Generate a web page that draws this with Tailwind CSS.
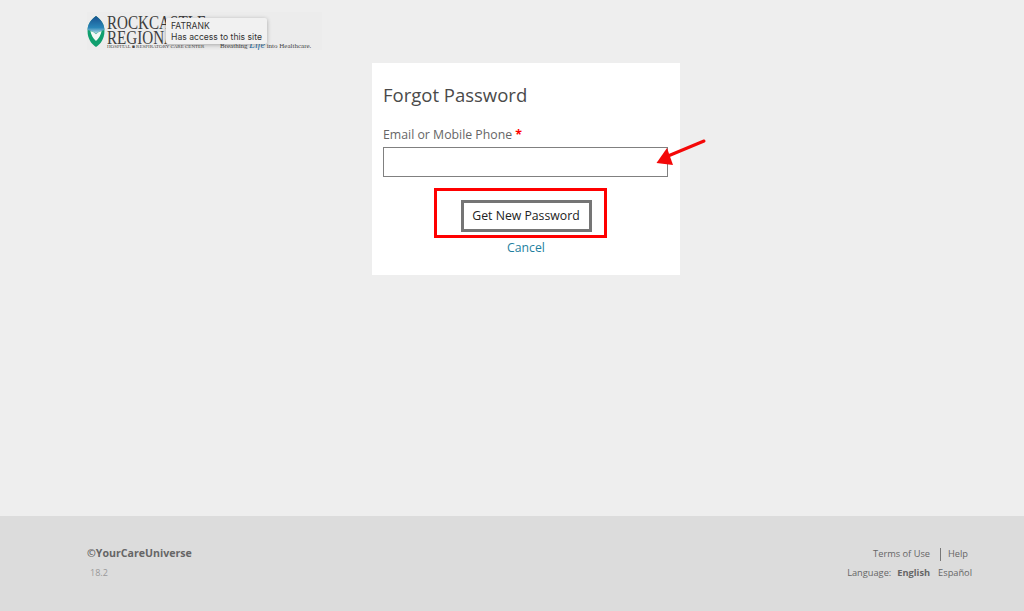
<!doctype html>
<html lang="en">
<head>
<meta charset="utf-8">
<script src="https://cdn.jsdelivr.net/npm/@tailwindcss/browser@4"></script>
<title>Forgot Password</title>
</head>
<body class="m-0 bg-[#eeeeee] font-['Open_Sans',sans-serif]">
<div class="flex h-[611px] w-[1024px] flex-col overflow-hidden">
  <header class="h-[63px] shrink-0 pl-[87px] pt-[12px]">
    <div class="relative h-[38px] w-[235px] bg-[#ececec]">
      <div class="absolute left-0 top-[4px] flex items-start">
        <svg width="18" height="31" viewBox="0 0 19 33" class="shrink-0">
          <defs>
            <linearGradient id="leafTop" x1="0" y1="0" x2="0" y2="1">
              <stop offset="0" stop-color="#17508f"/>
              <stop offset="0.65" stop-color="#2a86b8"/>
              <stop offset="1" stop-color="#bcdde6"/>
            </linearGradient>
          </defs>
          <path d="M9.500 0C4 4 .5 9 .5 16c0 8 4 14 9 17 5-3 9-9 9-17 0-7-3.500-12-9-16z" fill="#0f9f6e"/>
          <path d="M9.500 0C4 4 .5 9 .5 15c3 .5 6 1.500 9 4 3-2.500 6-3.500 9-4 0-6-3.500-11-9-15z" fill="url(#leafTop)"/>
          <path d="M3.500 16c2 .5 4 1.500 6 3.500 2-2 4-3 6-3.500-1 4.500-3 8-6 10.500-3-2.500-5-6-6-10.500z" fill="#f4f8f6"/>
        </svg>
        <div class="ml-[2px] origin-left scale-x-[0.84] font-['Liberation_Serif',serif] text-[18px] leading-[15px] text-[#3d3d3d]">
          <div>ROCKCASTLE</div>
          <div>REGIONAL</div>
        </div>
      </div>
      <div class="absolute left-[20px] top-[32px] whitespace-nowrap font-['Liberation_Serif',serif] text-[5px] leading-[6px] text-[#444444]">HOSPITAL &#9632; RESPIRATORY CARE CENTER</div>
      <div class="absolute left-[133px] top-[28px] whitespace-nowrap font-['Liberation_Serif',serif] text-[7px] leading-[10px] text-[#444444]">Breathing <span class="italic text-[10px] text-[#1f6fa8]">Life</span> into Healthcare.</div>
      <div class="absolute left-[79px] top-[6px] h-[26px] w-[101px] rounded-[2px] bg-[#f1f1f1] px-[5px] pt-[3px] font-['Inter',sans-serif] text-[8.600px] leading-[11px] text-[#333333] shadow-[0_1px_4px_rgba(0,0,0,0.3)]">
        <div>FATRANK</div>
        <div class="whitespace-nowrap">Has access to this site</div>
      </div>
    </div>
  </header>

  <main class="flex flex-1 justify-center pl-[28px]">
    <div class="relative h-[212px] w-[308px] bg-white px-[11px] pt-[18px]">
      <h1 class="text-[18.500px] leading-[27px] text-[#4a4a4a]">Forgot Password</h1>
      <label class="mt-[18px] block text-[12.300px] leading-[18px] text-[#666666]">Email or Mobile Phone <span class="font-bold text-[#ff0000]">*</span></label>
      <input type="text" aria-label="Email or Mobile Phone" class="mt-[3px] block h-[30px] w-[285px] border border-[#808080] bg-white">
      <div class="mt-[11px] flex justify-center pr-[12px]">
        <div class="flex h-[50px] w-[173px] items-center justify-center border-[3px] border-[#ff0000] bg-white">
          <button class="ml-[12px] mt-[6px] h-[32px] w-[131px] border-[3px] border-[#757575] bg-white text-[12.250px] text-[#222222]">Get New Password</button>
        </div>
      </div>
      <div class="mt-[1px] text-center text-[12.250px] leading-[18px] text-[#1f7fa0]">Cancel</div>
      <svg class="absolute left-[280px] top-[74px]" width="60" height="30" viewBox="0 0 60 30">
        <path d="M52 4 L16 19" stroke="#f40808" stroke-width="3" stroke-linecap="round" fill="none"/>
        <path d="M4.500 26 L15 11 L21 28 Z" fill="#f40808"/>
      </svg>
    </div>
  </main>

  <footer class="flex h-[95px] shrink-0 items-start justify-between bg-[#dcdcdc] pl-[87px] pr-[52px] pt-[29px] text-[#666666]">
    <div>
      <div class="text-[10.600px] font-bold leading-[16px]">©YourCareUniverse</div>
      <div class="mt-[4px] pl-[3px] text-[9px] leading-[16px] text-[#999999]">18.2</div>
    </div>
    <div class="flex flex-col items-end text-[9.250px] leading-[14px]">
      <div class="mt-[2px] flex items-center">
        <span>Terms of Use</span>
        <span class="ml-[10px] mr-[7px] h-[13px] w-px bg-[#777777]"></span>
        <span class="mr-[4px]">Help</span>
      </div>
      <div class="mt-[5px] flex">
        <span>Language:</span>
        <span class="ml-[6px] font-bold">English</span>
        <span class="ml-[8px]">Español</span>
      </div>
    </div>
  </footer>
</div>
</body>
</html>
